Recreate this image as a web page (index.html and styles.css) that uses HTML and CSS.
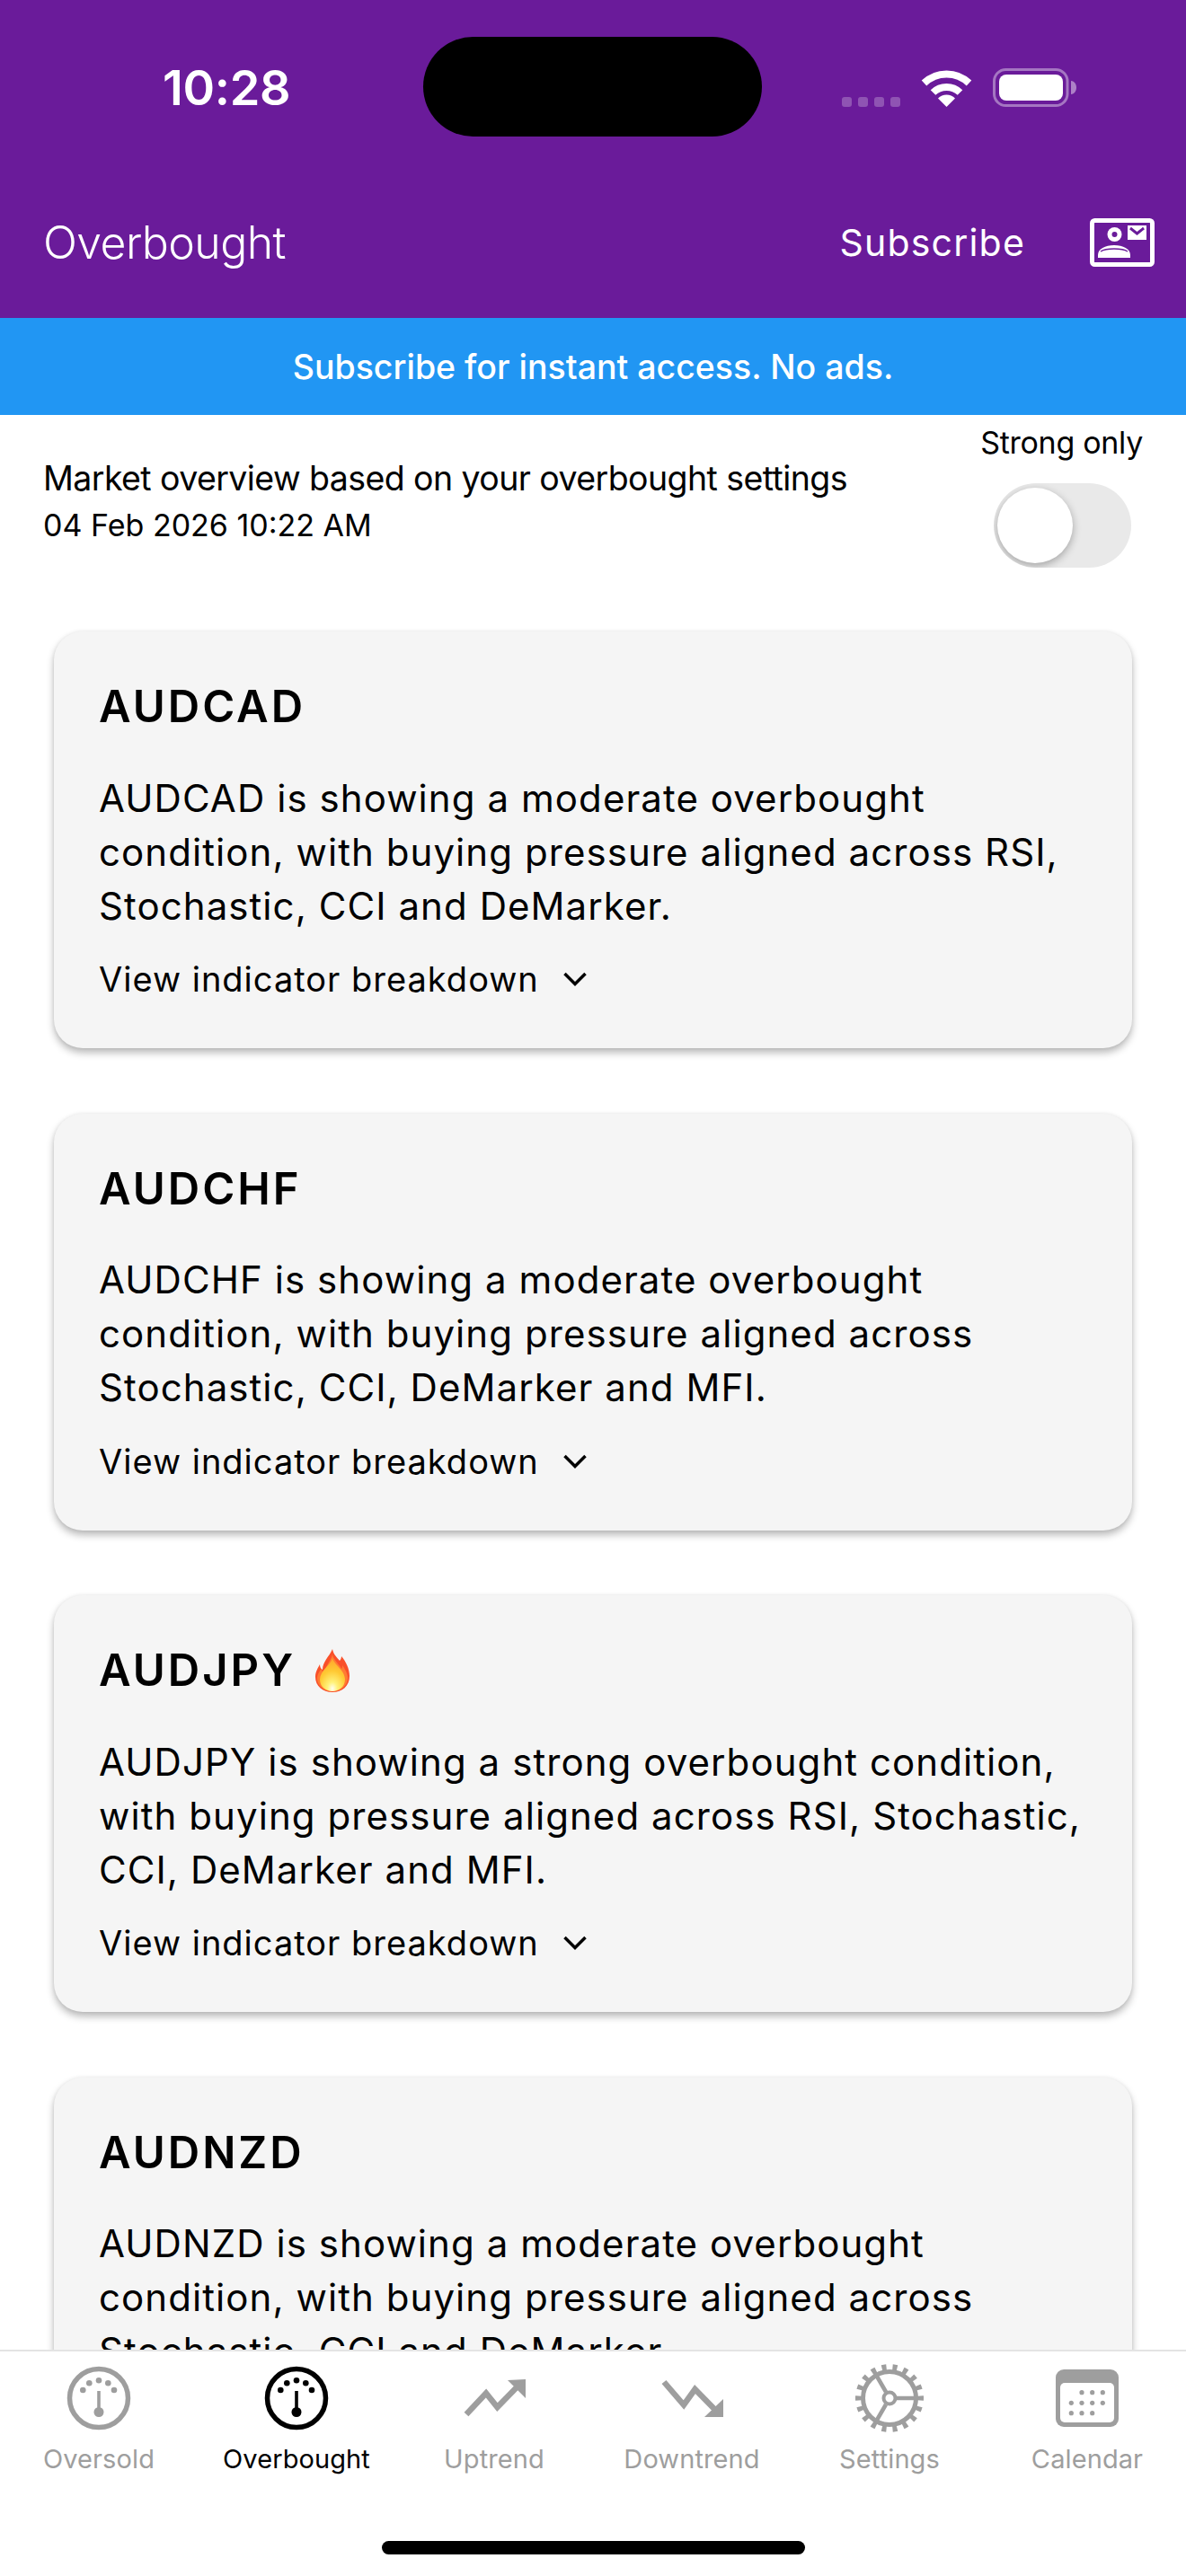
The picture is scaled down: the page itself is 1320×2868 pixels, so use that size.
FILE: index.html
```html
<!DOCTYPE html>
<html lang="en">
<head>
<meta charset="UTF-8">
<title>Overbought</title>
<link rel="stylesheet" href="styles.css">
</head>
<body>

<div class="page">
  <header class="header">
    <div class="status">
      <span class="time">10:28</span>
      <div class="island"></div>
      <div class="status-icons">
        <div class="signal"><i></i><i></i><i></i><i></i></div>
        <svg class="wifi" width="57" height="42" viewBox="0 0 57 42">
          <path d="M3.5 15.5A36 36 0 0 1 53.5 15.5" fill="none" stroke="#fff" stroke-width="8"/>
          <path d="M13.5 26A21.5 21.5 0 0 1 43.5 26" fill="none" stroke="#fff" stroke-width="8"/>
          <path d="M28.5 42L19 32.5A13.5 13.5 0 0 1 38 32.5Z" fill="#fff"/>
        </svg>
        <svg class="battery" width="93" height="43" viewBox="0 0 93 43">
          <rect x="1.5" y="1.5" width="81.5" height="40" rx="13" fill="none" stroke="#fff" stroke-opacity=".4" stroke-width="3"/>
          <rect x="7" y="7" width="71" height="29" rx="8" fill="#fff"/>
          <path d="M87 14c3 0 6 3 6 7.5s-3 7.5-6 7.5z" fill="#fff" fill-opacity=".45"/>
        </svg>
      </div>
    </div>
    <div class="appbar">
      <h1>Overbought</h1>
      <div class="appbar-actions">
        <a class="subscribe">Subscribe</a>
        <svg width="72" height="54" viewBox="0 0 72 54">
          <rect x="2.5" y="2.5" width="67" height="49" rx="3" fill="none" stroke="#fff" stroke-width="5"/>
          <circle cx="27.5" cy="18" r="8" fill="#fff"/>
          <circle cx="27.5" cy="18" r="3" fill="#6a1b9a"/>
          <path d="M9 44v-3c0-7 8-11 18-11s18 4 18 11v3z" fill="#fff"/>
          <path d="M12 37c3-2 9-3 15-3s12 1 15 3" fill="none" stroke="#6a1b9a" stroke-width="1.5"/>
          <rect x="42" y="8" width="21" height="16" fill="#fff"/>
          <path d="M45 11l7.5 6 7.5-6" fill="none" stroke="#6a1b9a" stroke-width="3"/>
        </svg>
      </div>
    </div>
  </header>

  <div class="banner">Subscribe for instant access. No ads.</div>

  <main class="content">
    <div class="overview">
      <div class="overview-text">
        <p class="overview-title">Market overview based on your overbought settings</p>
        <p class="overview-date">04 Feb 2026 10:22 AM</p>
      </div>
      <div class="strong">
        <span class="strong-label">Strong only</span>
        <div class="toggle"><div class="knob"></div></div>
      </div>
    </div>

    <div class="cards">
      <section class="card">
        <h2>AUDCAD</h2>
        <p>AUDCAD is showing a moderate overbought condition, with buying pressure aligned across RSI, Stochastic, CCI and DeMarker.</p>
        <div class="more">View indicator breakdown
          <svg width="28" height="18" viewBox="0 0 28 18"><path d="M2.5 3l11.5 11.5L25.5 3" fill="none" stroke="#000" stroke-width="3.5"/></svg>
        </div>
      </section>
      <section class="card">
        <h2>AUDCHF</h2>
        <p>AUDCHF is showing a moderate overbought condition, with buying pressure aligned across Stochastic, CCI, DeMarker and MFI.</p>
        <div class="more">View indicator breakdown
          <svg width="28" height="18" viewBox="0 0 28 18"><path d="M2.5 3l11.5 11.5L25.5 3" fill="none" stroke="#000" stroke-width="3.5"/></svg>
        </div>
      </section>
      <section class="card">
        <h2>AUDJPY
          <svg class="flame" width="38" height="48" viewBox="0 0 38 48">
            <defs>
              <radialGradient id="flameFill" cx=".5" cy=".92" r=".9">
                <stop offset="0" stop-color="#fffef2"/>
                <stop offset=".22" stop-color="#fff27a"/>
                <stop offset=".6" stop-color="#ffc933"/>
                <stop offset="1" stop-color="#ffa42c"/>
              </radialGradient>
            </defs>
            <path d="M19 0c1 6 5 9 8 13 1-1 2-3 2-5 5 6 9 14 9 22 0 11-8 18-19 18S0 41 0 31c0-6 3-10 5-14 0 3 1 5 3 6C8 14 15 9 19 0z" fill="#f9502a"/>
            <path d="M19 6c1 6 7 10 10 16 1-1 1-2 1-4 3 4 6 10 6 14 0 9-8 15-17 15S2 41 2 33c0-5 3-9 5-11 0 2 1 4 3 5 0-7 7-13 9-21z" fill="#ff7b33"/>
            <path d="M19 10c2 8 14 13 14 24 0 8-7 13-14 13S5 42 5 34c0-10 12-16 14-24z" fill="url(#flameFill)"/>
          </svg>
        </h2>
        <p>AUDJPY is showing a strong overbought condition, with buying pressure aligned across RSI, Stochastic, CCI, DeMarker and MFI.</p>
        <div class="more">View indicator breakdown
          <svg width="28" height="18" viewBox="0 0 28 18"><path d="M2.5 3l11.5 11.5L25.5 3" fill="none" stroke="#000" stroke-width="3.5"/></svg>
        </div>
      </section>
      <section class="card">
        <h2>AUDNZD</h2>
        <p>AUDNZD is showing a moderate overbought condition, with buying pressure aligned across Stochastic, CCI and DeMarker.</p>
        <div class="more">View indicator breakdown
          <svg width="28" height="18" viewBox="0 0 28 18"><path d="M2.5 3l11.5 11.5L25.5 3" fill="none" stroke="#000" stroke-width="3.5"/></svg>
        </div>
      </section>
    </div>
  </main>

  <nav class="tabbar">
    <div class="tabs">
      <div class="tab">
        <div class="tab-icon">
          <svg width="72" height="72" viewBox="0 0 72 72">
            <circle cx="36" cy="36" r="32.5" fill="none" stroke="currentColor" stroke-width="5.5"/>
            <g fill="currentColor">
              <circle cx="18.3" cy="27" r="3.3"/><circle cx="25.3" cy="19.3" r="3.3"/><circle cx="36" cy="16.3" r="3.3"/><circle cx="46.3" cy="19.3" r="3.3"/><circle cx="53" cy="27" r="3.3"/>
              <rect x="34.2" y="28" width="3.6" height="20"/><circle cx="36" cy="51.5" r="5.5"/>
            </g>
          </svg>
        </div>
        <span>Oversold</span>
      </div>
      <div class="tab active">
        <div class="tab-icon">
          <svg width="72" height="72" viewBox="0 0 72 72">
            <circle cx="36" cy="36" r="32.5" fill="none" stroke="currentColor" stroke-width="5.5"/>
            <g fill="currentColor">
              <circle cx="18.3" cy="27" r="3.3"/><circle cx="25.3" cy="19.3" r="3.3"/><circle cx="36" cy="16.3" r="3.3"/><circle cx="46.3" cy="19.3" r="3.3"/><circle cx="53" cy="27" r="3.3"/>
              <rect x="34.2" y="28" width="3.6" height="20"/><circle cx="36" cy="51.5" r="5.5"/>
            </g>
          </svg>
        </div>
        <span>Overbought</span>
      </div>
      <div class="tab">
        <div class="tab-icon">
          <svg width="69" height="42" viewBox="0 0 69 42">
            <path d="M3 39L25 15.5 37.5 31 60 8" fill="none" stroke="currentColor" stroke-width="6.5"/>
            <path d="M49 1L69 0V21z" fill="currentColor"/>
          </svg>
        </div>
        <span>Uptrend</span>
      </div>
      <div class="tab">
        <div class="tab-icon">
          <svg width="69" height="42" viewBox="0 0 69 42">
            <path d="M3 3L25 28.5 37.5 11 60 34" fill="none" stroke="currentColor" stroke-width="6.5"/>
            <path d="M69 22V42H48z" fill="currentColor"/>
          </svg>
        </div>
        <span>Downtrend</span>
      </div>
      <div class="tab">
        <div class="tab-icon">
          <svg width="78" height="78" viewBox="0 0 78 78">
            <circle cx="39" cy="39" r="34.5" fill="none" stroke="currentColor" stroke-width="7" pathLength="18" stroke-dasharray=".42 .58" stroke-dashoffset=".21"/>
            <circle cx="39" cy="39" r="29.5" fill="none" stroke="currentColor" stroke-width="5"/>
            <path d="M47 39H68M35 32L24 13M35 46L24 65" fill="none" stroke="currentColor" stroke-width="4.5"/>
            <circle cx="39" cy="39" r="6.5" fill="#fff" stroke="currentColor" stroke-width="4"/>
          </svg>
        </div>
        <span>Settings</span>
      </div>
      <div class="tab">
        <div class="tab-icon">
          <svg width="70" height="64" viewBox="0 0 70 64">
            <rect width="70" height="64" rx="9" fill="currentColor"/>
            <rect x="5" y="15" width="60" height="44" rx="5" fill="#fff"/>
            <g fill="currentColor">
              <circle cx="29" cy="25.7" r="2.6"/><circle cx="40.7" cy="25.7" r="2.6"/><circle cx="52.3" cy="25.7" r="2.6"/>
              <circle cx="17.3" cy="37.3" r="2.6"/><circle cx="29" cy="37.3" r="2.6"/><circle cx="40.7" cy="37.3" r="2.6"/><circle cx="52.3" cy="37.3" r="2.6"/>
              <circle cx="17.3" cy="48.7" r="2.6"/><circle cx="29" cy="48.7" r="2.6"/><circle cx="40.7" cy="48.7" r="2.6"/>
            </g>
          </svg>
        </div>
        <span>Calendar</span>
      </div>
    </div>
    <div class="home-bar"></div>
  </nav>
</div>

</body>
</html>
```

FILE: styles.css
```css
* { box-sizing: border-box; }
html, body { margin: 0; padding: 0; }
body { font-family: Inter, "Noto Sans", sans-serif; color: #000; background: #fff; }
h1, h2, p { margin: 0; font-weight: normal; }

.page { width: 1320px; height: 2868px; display: flex; flex-direction: column; overflow: hidden; }

.header { height: 354px; flex: none; background: #6a1b9a; color: #fff; position: relative; }
.status { height: 194px; padding: 0 122px 0 181px; display: flex; align-items: center; justify-content: space-between; }
.time { font-size: 54px; font-weight: 600; letter-spacing: -.3px; }
.island { position: absolute; left: 471px; top: 41px; width: 377px; height: 111px; border-radius: 56px; background: #000; }
.status-icons { display: flex; align-items: flex-end; gap: 23px; }
.signal { display: flex; gap: 7px; }
.signal i { width: 11px; height: 11px; border-radius: 3px; background: rgba(255,255,255,.25); }
.wifi, .battery { display: block; }

.appbar { height: 152px; padding: 0 35px 0 48px; display: flex; align-items: center; justify-content: space-between; }
.appbar h1 { font-size: 50px; font-weight: 300; letter-spacing: -.6px; }
.appbar-actions { display: flex; align-items: center; gap: 72px; }
.subscribe { font-size: 41px; letter-spacing: 1.2px; }
.appbar-actions svg { display: block; }

.banner { height: 108px; flex: none; background: #2196f3; color: #fff; font-size: 37.5px; font-weight: 500; display: flex; align-items: center; justify-content: center; }

.content { flex: 1; min-height: 0; overflow: hidden; }

.overview { height: 240px; padding: 0 48px; display: flex; justify-content: space-between; }
.overview-text { padding-top: 47px; }
.overview-title { font-size: 37.5px; line-height: 48px; letter-spacing: -.58px; }
.overview-date { font-size: 34px; line-height: 48px; margin-top: 4px; }
.strong { display: flex; flex-direction: column; align-items: center; padding-top: 9px; }
.strong-label { font-size: 34px; line-height: 44px; letter-spacing: -.3px; }
.toggle { width: 153px; height: 94px; margin: 23px 0 0 1px; padding: 5px 4px; border-radius: 47px; background: #e9e9e9; overflow: hidden; }
.knob { width: 84px; height: 84px; border-radius: 50%; background: #fff; box-shadow: 0 3px 10px rgba(0,0,0,.3); }

.cards { padding: 1px 60px 0; display: flex; flex-direction: column; gap: 72.5px; }
.card { height: 464px; padding: 54px 40px 0 50px; background: #f5f5f5; border-radius: 32px; box-shadow: 0 5px 8px rgba(0,0,0,.28), 0 0 4px rgba(0,0,0,.06); }
.card h2 { font-size: 49px; line-height: 60px; font-weight: 600; letter-spacing: 3px; display: flex; align-items: center; gap: 22px; }
.card p { font-size: 42px; line-height: 60px; letter-spacing: 1.07px; margin-top: 41.5px; }
.more { font-size: 38px; line-height: 50px; letter-spacing: 1px; margin-top: 26.5px; display: flex; align-items: center; gap: 26px; }
.more svg { display: block; }

.tabbar { height: 252px; flex: none; background: #fff; border-top: 2px solid #e4e4e4; position: relative; }
.tabs { display: grid; grid-template-columns: repeat(6, 220px); padding-top: 12px; }
.tab { display: flex; flex-direction: column; align-items: center; color: #9e9e9e; font-size: 29px; line-height: 36px; letter-spacing: .1px; }
.tab.active { color: #000; }
.tab-icon { height: 80px; display: flex; align-items: center; justify-content: center; margin-bottom: 10px; }
.tab-icon svg { display: block; }
.home-bar { width: 471px; height: 15px; margin: 73px auto 0; border-radius: 8px; background: #000; }
```
